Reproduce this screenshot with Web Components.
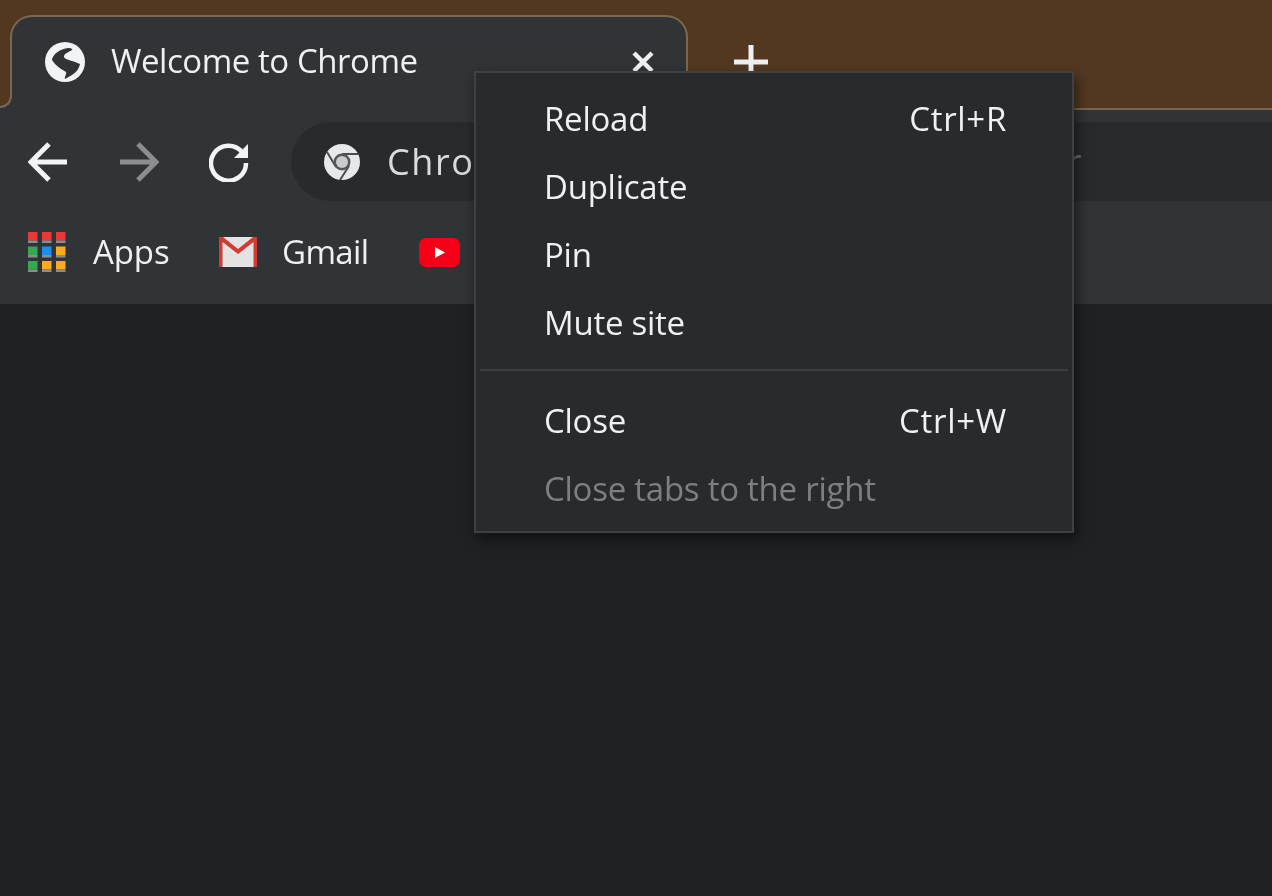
<!DOCTYPE html>
<html>
<head>
<meta charset="utf-8">
<title>Welcome to Chrome</title>
<style>
html, body { margin: 0; height: 100%; background: #202124; overflow: hidden; }
body { font-family: "Open Sans", "Noto Sans", sans-serif; color: #eceef0; }
</style>
</head>
<body>
<browser-window>
  <tab-strip>
    <browser-tab>Welcome to Chrome</browser-tab>
  </tab-strip>
  <nav-toolbar>
    <span>Chrome</span>
    <span slot="tail">r</span>
  </nav-toolbar>
  <bookmark-bar>
    <bookmark-item icon="apps" width="190" gap="27">Apps</bookmark-item>
    <bookmark-item icon="gmail" width="201" gap="24">Gmail</bookmark-item>
    <bookmark-item icon="youtube"></bookmark-item>
  </bookmark-bar>
  <tab-menu>
    <menu-item shortcut="Ctrl+R">Reload</menu-item>
    <menu-item>Duplicate</menu-item>
    <menu-item>Pin</menu-item>
    <menu-item>Mute site</menu-item>
    <hr>
    <menu-item shortcut="Ctrl+W">Close</menu-item>
    <menu-item disabled>Close tabs to the right</menu-item>
  </tab-menu>
</browser-window>

<script>
class Base extends HTMLElement {
  constructor(html) {
    super();
    this.attachShadow({ mode: "open" }).innerHTML = html;
  }
}

class BrowserWindow extends Base {
  constructor() {
    super(`<style>
      :host { display: flex; flex-direction: column; position: relative; height: 896px; overflow: hidden; background: #202124; filter: blur(.55px); }
      .page { flex: 1; }
    </style>
    <slot></slot>
    <div class="page"></div>`);
  }
}

class TabStrip extends Base {
  constructor() {
    super(`<style>
      :host { display: flex; align-items: flex-end; height: 110px; box-sizing: border-box; padding: 15px 0 0 10px; background: #533821; border-bottom: 2px solid #7c6650; }
      .plus { width: 126px; height: 93px; flex: none; display: flex; justify-content: center; }
      .plus svg { margin-top: 29px; }
    </style>
    <slot></slot>
    <div class="plus">
      <svg width="36" height="36" viewBox="0 0 36 36"><path d="M18 1v34M1 18h34" stroke="#eef0f2" stroke-width="5" fill="none"/></svg>
    </div>`);
  }
}

class BrowserTab extends Base {
  constructor() {
    super(`<style>
      :host { display: flex; align-items: flex-start; position: relative; box-sizing: border-box; width: 678px; height: 95px; margin-bottom: -2px; padding: 25px 0 0 33px;
        background: #303437; border: 2px solid #7c6650; border-bottom: 0; border-radius: 22px 22px 0 0; z-index: 1; }
      :host::before { content: ""; position: absolute; left: -12px; bottom: 0; width: 12px; height: 12px; background: #303437; }
      :host::after { content: ""; position: absolute; left: -14px; bottom: 2px; width: 12px; height: 12px; background: #533821; border-right: 2px solid #7c6650; border-bottom: 2px solid #7c6650; border-bottom-right-radius: 12px; }
      svg { flex: none; }
      .title { margin-left: 26px; font-size: 33px; line-height: 42px; letter-spacing: -.45px; white-space: nowrap; flex: 1; margin-top: -2px; color: #eef0f2; }
      .close { flex: none; margin: 9px 32px 0 0; }
    </style>
    <svg width="40" height="40" viewBox="0 0 40 40">
      <circle cx="20" cy="20" r="20" fill="#f1f3f4"/>
      <path d="M7 17C9 12 13 8 23 6c3 0 5 1 4 2-3 2-7 3-8 6-1 3 6 4 11 6l5 2c-1 4-3 8-8 11l-7 4c-1-2 2-5 1-7-3-2-7-4-10-7-2-2-3-4-4-5z" fill="#303437"/>
    </svg>
    <span class="title"><slot></slot></span>
    <svg class="close" width="22" height="22" viewBox="0 0 22 22"><path d="M2 2l18 18M20 2L2 20" stroke="#eef0f2" stroke-width="4.500" fill="none"/></svg>`);
  }
}

class NavToolbar extends Base {
  constructor() {
    super(`<style>
      :host { display: flex; align-items: center; height: 94px; box-sizing: border-box; padding: 12px 0 3px 28px; background: #303437; }
      svg { flex: none; }
      .forward { margin-left: 51px; }
      .reload { margin-left: 50px; }
      .pill { flex: 1; display: flex; align-items: center; height: 79px; margin-left: 42px; padding-left: 33px; border-radius: 40px 0 0 40px; background: #282a2c; color: #d9dbdd; font-size: 36px; letter-spacing: 1.6px; }
      .pill svg { margin-right: 27px; }
      .tail { margin-left: auto; margin-right: 189px; color: #6c6e70; }
    </style>
    <svg width="40" height="40" viewBox="0 0 40 40"><path d="M39 20H3M21 2L3 20l18 18" stroke="#f1f3f4" stroke-width="5" fill="none"/></svg>
    <svg class="forward" width="40" height="40" viewBox="0 0 40 40"><path d="M1 20h36M19 2l18 18-18 18" stroke="#8b8d8f" stroke-width="5" fill="none"/></svg>
    <svg class="reload" width="40" height="40" viewBox="0 0 40 40"><path d="M33 10A17.500 17.500 0 1 0 37 21" stroke="#f1f3f4" stroke-width="4.500" fill="none"/><path d="M39 2v14H25z" fill="#f1f3f4"/></svg>
    <div class="pill">
      <svg width="36" height="36" viewBox="0 0 36 36">
        <circle cx="18" cy="18" r="18" fill="#e6e8ea"/>
        <path d="M3 8l9 15M18 10h16M25 22l-9 14" stroke="#4a4c4e" stroke-width="2" fill="none"/>
        <circle cx="18" cy="18" r="8.500" fill="#55575a"/>
        <circle cx="18" cy="18" r="6" fill="#c9cbcd"/>
      </svg>
      <slot></slot>
      <span class="tail"><slot name="tail"></slot></span>
    </div>`);
  }
}

class BookmarkBar extends Base {
  constructor() {
    super(`<style>
      :host { display: flex; align-items: center; height: 100px; box-sizing: border-box; padding: 0 0 4px 28px; background: #303437; }
    </style>
    <slot></slot>`);
  }
}

const BOOKMARK_ICONS = {
  apps: `<svg width="38" height="41" viewBox="0 0 38 41">
    ${[["#ea3838","#ea3838","#ea3838"],["#34a853","#1e8df0","#fbab1c"],["#34a853","#fbab1c","#fbab1c"]].map((row, y) =>
      row.map((c, x) => `<rect x="${x*14}" y="${y*14.5}" width="9.500" height="8.500" fill="${c}"/><rect x="${x*14}" y="${y*14.5+8.5}" width="9.500" height="2.500" fill="#8d8d8d"/>`).join("")).join("")}
  </svg>`,
  gmail: `<svg width="40" height="32" viewBox="0 0 40 32">
    <rect x="1" y="1" width="38" height="30" rx="2" fill="#e3e3e3"/>
    <path d="M1 1h4l15 12L35 1h4v30h-3.500V6L20 18 4.500 6v25H1z" fill="#d33b32"/>
  </svg>`,
  youtube: `<svg width="41" height="29" viewBox="0 0 41 29">
    <rect width="41" height="29" rx="7" fill="#f60017"/>
    <path d="M16 9l10 5.500-10 5.500z" fill="#fff"/>
  </svg>`
};

class BookmarkItem extends Base {
  constructor() {
    super(`<style>
      :host { display: flex; align-items: center; flex: none; }
      .label { font-size: 33px; line-height: 42px; letter-spacing: -.1px; color: #eef0f2; }
      :host([icon="gmail"]) .label { letter-spacing: -.6px; }
    </style>
    <span class="icon"></span><span class="label"><slot></slot></span>`);
  }
  connectedCallback() {
    var icon = this.shadowRoot.querySelector(".icon");
    icon.innerHTML = BOOKMARK_ICONS[this.getAttribute("icon")];
    icon.style.display = "flex";
    if (this.getAttribute("width")) this.style.width = this.getAttribute("width") + "px";
    this.shadowRoot.querySelector(".label").style.marginLeft = (this.getAttribute("gap") || 0) + "px";
  }
}

class TabMenu extends Base {
  constructor() {
    super(`<style>
      :host { position: absolute; left: 474px; top: 71px; width: 600px; height: 462px; box-sizing: border-box; padding: 11px 2px; background: #292a2d; border: 2px solid #3e4043; box-shadow: 3px 6px 12px rgba(0,0,0,.5); z-index: 5; }
      ::slotted(hr) { height: 2px; margin: 13px 2px 15px; border: 0; background: #3c3e41; }
    </style>
    <slot></slot>`);
  }
}

class MenuItem extends Base {
  constructor() {
    super(`<style>
      :host { display: flex; justify-content: space-between; align-items: center; height: 68px; padding: 0 63px 0 66px; font-size: 33px; letter-spacing: -.25px; color: #eef0f2; white-space: nowrap; }
      :host([disabled]) { color: #7d7f82; }
      .key { letter-spacing: .7px; }
    </style>
    <span><slot></slot></span><span class="key"></span>`);
  }
  connectedCallback() {
    this.shadowRoot.querySelector(".key").textContent = this.getAttribute("shortcut") || "";
  }
}

customElements.define("browser-window", BrowserWindow);
customElements.define("tab-strip", TabStrip);
customElements.define("browser-tab", BrowserTab);
customElements.define("nav-toolbar", NavToolbar);
customElements.define("bookmark-bar", BookmarkBar);
customElements.define("bookmark-item", BookmarkItem);
customElements.define("tab-menu", TabMenu);
customElements.define("menu-item", MenuItem);
</script>
</body>
</html>
